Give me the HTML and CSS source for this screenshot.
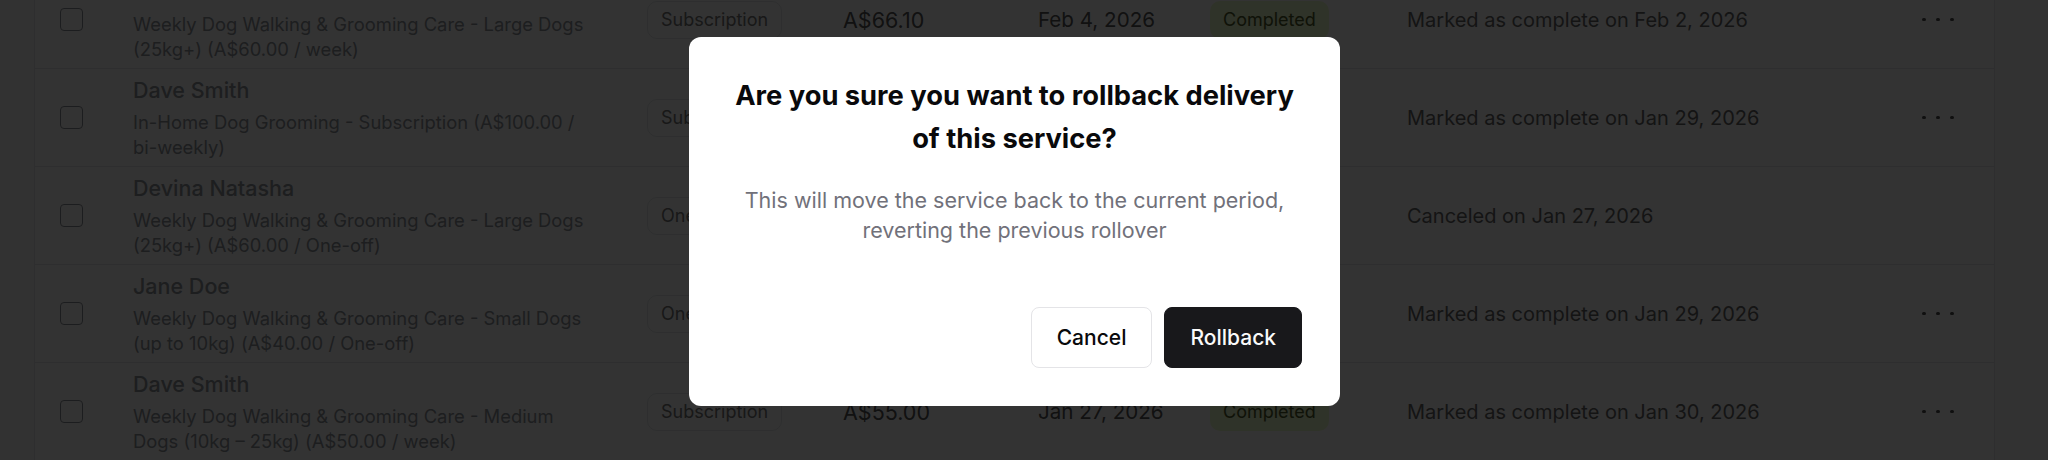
FILE: index.html
```html
<!DOCTYPE html>
<html lang="en">
<head>
<meta charset="utf-8">
<title>Service deliveries</title>
<link rel="stylesheet" href="styles.css">
</head>
<body>
<div class="page">
  <div class="table">
    <div class="row">
      <div class="cell-check"><span class="checkbox"></span></div>
      <div class="cell-service">
        <div class="client">Devina Natasha</div>
        <div class="service">Weekly Dog Walking &amp; Grooming Care - Large Dogs (25kg+) (A$60.00 / week)</div>
      </div>
      <div><span class="badge">Subscription</span></div>
      <div class="amount">A$66.10</div>
      <div class="date">Feb 4, 2026</div>
      <div><span class="status status-done">Completed</span></div>
      <div class="activity">Marked as complete on Feb 2, 2026</div>
      <div class="more"><span class="dot"></span><span class="dot"></span><span class="dot"></span></div>
    </div>
    <div class="row">
      <div class="cell-check"><span class="checkbox"></span></div>
      <div class="cell-service">
        <div class="client">Dave Smith</div>
        <div class="service">In-Home Dog Grooming - Subscription (A$100.00 / <span class="nowrap">bi-weekly)</span></div>
      </div>
      <div><span class="badge">Subscription</span></div>
      <div class="amount">A$110.00</div>
      <div class="date">Jan 31, 2026</div>
      <div><span class="status status-done">Completed</span></div>
      <div class="activity">Marked as complete on Jan 29, 2026</div>
      <div class="more"><span class="dot"></span><span class="dot"></span><span class="dot"></span></div>
    </div>
    <div class="row">
      <div class="cell-check"><span class="checkbox"></span></div>
      <div class="cell-service">
        <div class="client">Devina Natasha</div>
        <div class="service">Weekly Dog Walking &amp; Grooming Care - Large Dogs (25kg+) (A$60.00 / One-off)</div>
      </div>
      <div><span class="badge">One-off</span></div>
      <div class="amount">A$66.00</div>
      <div class="date">Jan 27, 2026</div>
      <div><span class="status status-cancel">Canceled</span></div>
      <div class="activity">Canceled on Jan 27, 2026</div>
      <div class="more"></div>
    </div>
    <div class="row">
      <div class="cell-check"><span class="checkbox"></span></div>
      <div class="cell-service">
        <div class="client">Jane Doe</div>
        <div class="service">Weekly Dog Walking &amp; Grooming Care - Small Dogs (up to 10kg) (A$40.00 / One-off)</div>
      </div>
      <div><span class="badge">One-off</span></div>
      <div class="amount">A$44.00</div>
      <div class="date">Jan 29, 2026</div>
      <div><span class="status status-done">Completed</span></div>
      <div class="activity">Marked as complete on Jan 29, 2026</div>
      <div class="more"><span class="dot"></span><span class="dot"></span><span class="dot"></span></div>
    </div>
    <div class="row">
      <div class="cell-check"><span class="checkbox"></span></div>
      <div class="cell-service">
        <div class="client">Dave Smith</div>
        <div class="service">Weekly Dog Walking &amp; Grooming Care - Medium Dogs (10kg – 25kg) (A$50.00 / week)</div>
      </div>
      <div><span class="badge">Subscription</span></div>
      <div class="amount">A$55.00</div>
      <div class="date">Jan 27, 2026</div>
      <div><span class="status status-done">Completed</span></div>
      <div class="activity">Marked as complete on Jan 30, 2026</div>
      <div class="more"><span class="dot"></span><span class="dot"></span><span class="dot"></span></div>
    </div>
  </div>
</div>

<div class="overlay">
  <div class="modal" role="dialog" aria-modal="true">
    <h2 class="modal-title">Are you sure you want to rollback delivery of this service?</h2>
    <p class="modal-text">This will move the service back to the current period, reverting the previous rollover</p>
    <div class="modal-actions">
      <button class="btn btn-secondary" type="button">Cancel</button>
      <button class="btn btn-primary" type="button">Rollback</button>
    </div>
  </div>
</div>
</body>
</html>
```

FILE: styles.css
```css
* { box-sizing: border-box; }

html, body {
  margin: 0;
  height: 100%;
  overflow: hidden;
}

body {
  background: #f9fafb;
  font-family: Inter, "Noto Sans", "Liberation Sans", sans-serif;
  color: #111827;
}

.page {
  padding-left: 34px;
}

.table {
  width: 1961px;
  margin-top: -29px;
  background: #ffffff;
  border-left: 1px solid #e5e7eb;
  border-right: 1px solid #e5e7eb;
}

.row {
  display: grid;
  grid-template-columns: 98px 514px 196px 195px 172px 197px 514px 1fr;
  align-items: center;
  height: 98px;
  border-bottom: 1px solid #e5e7eb;
}

.cell-check {
  padding-left: 25px;
  display: flex;
  align-items: center;
}

.checkbox {
  width: 23px;
  height: 23px;
  border: 1.5px solid #8e9399;
  border-radius: 4px;
  background: #ffffff;
}

.cell-service {
  padding-right: 54px;
}

.client {
  font-size: 21.5px;
  line-height: 28px;
  font-weight: 500;
  color: #8f959c;
  margin-bottom: 6px;
}

.service {
  font-size: 18.4px;
  line-height: 25px;
  color: #8f959c;
}

.nowrap { white-space: nowrap; }

.badge {
  display: inline-flex;
  align-items: center;
  height: 38px;
  padding: 0 13px;
  border: 1px solid #e5e7eb;
  border-radius: 10px;
  font-size: 18px;
  color: #777777;
  background: #ffffff;
}

.amount {
  font-size: 21.5px;
  color: #555555;
}

.date {
  font-size: 20.6px;
  color: #555555;
}

.status {
  display: inline-flex;
  align-items: center;
  height: 38px;
  padding: 0 13px;
  border-radius: 10px;
  font-size: 18px;
}

.status-done {
  background: #ecfccb;
  color: #4d5a2a;
}

.status-cancel {
  background: #fee2e2;
  color: #991b1b;
}

.activity {
  font-size: 20px;
  color: #666666;
}

.more {
  display: flex;
  align-items: center;
  gap: 10.5px;
  height: 20px;
  padding-left: 1px;
}

.dot {
  width: 3.5px;
  height: 3.5px;
  border-radius: 50%;
  background: #4b4b4b;
}

/* Modal */
.overlay {
  position: fixed;
  inset: 0;
  background: rgba(0, 0, 0, 0.8);
  display: flex;
  align-items: center;
  justify-content: center;
  padding: 0 19px 18px 0;
}

.modal {
  width: 651px;
  background: #ffffff;
  border-radius: 12px;
  padding: 37px 38px 38px;
  text-align: center;
}

.modal-title {
  margin: 0;
  font-size: 27.3px;
  line-height: 43px;
  font-weight: 700;
  color: #09090b;
}

.modal-text {
  margin: 25px 0 0;
  font-size: 21.5px;
  line-height: 30px;
  color: #71717a;
}

.modal-actions {
  display: flex;
  justify-content: flex-end;
  gap: 12px;
  margin-top: 62px;
}

.btn {
  height: 61px;
  padding: 0 25px;
  border-radius: 8px;
  font-family: inherit;
  font-size: 21px;
  font-weight: 500;
  cursor: pointer;
}

.btn-secondary {
  background: #ffffff;
  border: 1px solid #e4e4e7;
  color: #09090b;
}

.btn-primary {
  background: #18181b;
  border: 1px solid #18181b;
  color: #fafafa;
}
```
